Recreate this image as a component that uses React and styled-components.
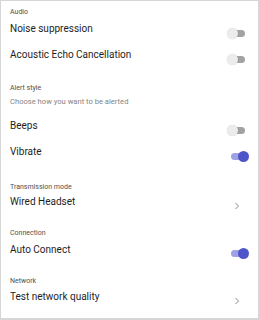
import React from "react";
import styled, { createGlobalStyle } from "styled-components";

const Global = createGlobalStyle`
  html, body { margin: 0; padding: 0; background: #fff; }
  body { font-family: Roboto, "Noto Sans", sans-serif; }
`;

const Frame = styled.div`
  box-sizing: border-box;
  width: 260px;
  height: 320px;
  border: 1px solid #d6d6d6;
  border-right-width: 2px;
  border-bottom-width: 2px;
  background: #fff;
  padding: 6px 13px 0 9px;
  display: flex;
  flex-direction: column;
`;

const Section = styled.section`
  display: flex;
  flex-direction: column;
  margin-top: ${(p) => p.$gap || 0}px;
`;

const Label = styled.div`
  font-size: 7px;
  color: #4f4f4f;
  line-height: 10px;
  height: 10px;
`;

const Hint = styled.div`
  font-size: 7.6px;
  color: #858585;
  line-height: 10px;
  margin-top: 3.5px;
`;

const Rows = styled.div`
  display: flex;
  flex-direction: column;
  margin-top: ${(p) => p.$top || 0}px;
`;

const Row = styled.div`
  display: flex;
  justify-content: space-between;
  align-items: flex-start;
  height: 26px;
`;

const Title = styled.div`
  font-size: 10px;
  color: #1e1e1e;
  line-height: 14px;
`;

const Track = styled.div`
  position: relative;
  width: 14px;
  height: 7px;
  border-radius: 4px;
  margin-top: 7.5px;
  background: ${(p) => (p.$on ? "#9ea2e3" : "#a2a2a2")};
`;

const Thumb = styled.div`
  position: absolute;
  top: -2px;
  left: ${(p) => (p.$on ? "7px" : "-4px")};
  width: 11px;
  height: 11px;
  border-radius: 50%;
  background: ${(p) => (p.$on ? "#4e55c9" : "#ececec")};
  box-shadow: ${(p) => (p.$on ? "none" : "0 0 1px rgba(0,0,0,0.2)")};
`;

const Chevron = styled.svg`
  width: 8px;
  height: 8px;
  margin-top: 7px;
  margin-right: 4px;
`;

const Toggle = ({ on }) => (
  <Track $on={on}>
    <Thumb $on={on} />
  </Track>
);

const Arrow = () => (
  <Chevron viewBox="0 0 8 8">
    <path d="M2.5 1 L5.5 4 L2.5 7" fill="none" stroke="#8a8a8a" strokeWidth="1" />
  </Chevron>
);

const ToggleRow = ({ title, on }) => (
  <Row>
    <Title>{title}</Title>
    <Toggle on={on} />
  </Row>
);

const LinkRow = ({ title }) => (
  <Row>
    <Title>{title}</Title>
    <Arrow />
  </Row>
);

export default function App() {
  return (
    <>
      <Global />
      <Frame>
        <Section>
          <Label>Audio</Label>
          <Rows $top={5}>
            <ToggleRow title="Noise suppression" on={false} />
            <ToggleRow title="Acoustic Echo Cancellation" on={false} />
          </Rows>
        </Section>
        <Section $gap={9}>
          <Label>Alert style</Label>
          <Hint>Choose how you want to be alerted</Hint>
          <Rows $top={12.5}>
            <ToggleRow title="Beeps" on={false} />
            <ToggleRow title="Vibrate" on={true} />
          </Rows>
        </Section>
        <Section $gap={11}>
          <Label>Transmission mode</Label>
          <Rows $top={3}>
            <LinkRow title="Wired Headset" />
          </Rows>
        </Section>
        <Section $gap={7}>
          <Label>Connection</Label>
          <Rows $top={4.5}>
            <ToggleRow title="Auto Connect" on={true} />
          </Rows>
        </Section>
        <Section $gap={7}>
          <Label>Network</Label>
          <Rows $top={4}>
            <LinkRow title="Test network quality" />
          </Rows>
        </Section>
      </Frame>
    </>
  );
}
